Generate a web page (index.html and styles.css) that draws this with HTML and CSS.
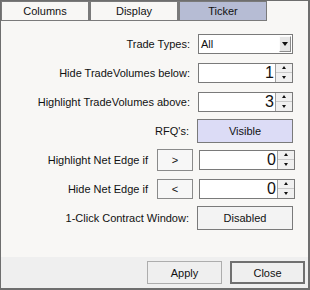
FILE: index.html
```html
<!DOCTYPE html>
<html>
<head>
    <meta charset="utf-8" />
    <title>Ticker Settings</title>
    <link rel="stylesheet" href="styles.css">
</head>
<body>
    <div class="window">
        <div class="tabs">
            <div class="tab">Columns</div>
            <div class="tab">Display</div>
            <div class="tab active">Ticker</div>
        </div>

        <div class="panel">
            <div class="row">
                <label>Trade Types:</label>
                <div class="combo">
                    <span>All</span>
                    <span class="combo_btn"><i class="arrow_down big"></i></span>
                </div>
            </div>

            <div class="row">
                <label>Hide TradeVolumes below:</label>
                <div class="spinner">
                    <span class="value">1</span>
                    <span class="spin"><b><i class="arrow_up"></i></b><b><i class="arrow_down"></i></b></span>
                </div>
            </div>

            <div class="row">
                <label>Highlight TradeVolumes above:</label>
                <div class="spinner">
                    <span class="value">3</span>
                    <span class="spin"><b><i class="arrow_up"></i></b><b><i class="arrow_down"></i></b></span>
                </div>
            </div>

            <div class="row">
                <label>RFQ's:</label>
                <button class="toggle visible">Visible</button>
            </div>

            <div class="row net">
                <label>Highlight Net Edge if</label>
                <button class="op tall">&gt;</button>
                <div class="spinner">
                    <span class="value">0</span>
                    <span class="spin"><b><i class="arrow_up"></i></b><b><i class="arrow_down"></i></b></span>
                </div>
            </div>

            <div class="row net">
                <label>Hide Net Edge if</label>
                <button class="op">&lt;</button>
                <div class="spinner">
                    <span class="value">0</span>
                    <span class="spin"><b><i class="arrow_up"></i></b><b><i class="arrow_down"></i></b></span>
                </div>
            </div>

            <div class="row">
                <label>1-Click Contract Window:</label>
                <button class="toggle">Disabled</button>
            </div>
        </div>

        <div class="footer">
            <button class="btn">Apply</button>
            <button class="btn default">Close</button>
        </div>
    </div>
</body>
</html>
```

FILE: styles.css
```css
body {
    margin: 0;
    background-color: #f8f7f5;
    color: #111;
    font-family: "Liberation Sans", Arial, sans-serif;
    font-size: 11px;
}

.window {
    width: 310px;
    height: 290px;
    box-sizing: border-box;
    border: 1px #6e6e6e solid;
    border-right-width: 2px;
    border-bottom-width: 2px;
    display: flex;
    flex-direction: column;
    background-color: #f8f7f5;
}

/* tab strip */
.tabs {
    display: flex;
    height: 20px;
}
.tab {
    width: 88px;
    box-sizing: border-box;
    border: 1px #7a7a7a solid;
    display: flex;
    align-items: center;
    justify-content: center;
}
.tab + .tab {
    border-left-width: 2px;
    width: 89px;
}
.tab.active {
    background-color: #b6bcd4;
}

/* form */
.panel {
    flex: 1;
    padding: 8px 15px 0 0;
    display: grid;
    grid-auto-rows: 29px;
}
.row {
    display: flex;
    align-items: center;
    justify-content: flex-end;
}
.row > label {
    margin-right: 8px;
}
.row.net > label {
    margin-right: 9px;
}

.combo, .spinner {
    width: 95px;
    height: 20px;
    box-sizing: border-box;
    border: 1px #7a7a7a solid;
    background-color: white;
    display: flex;
    align-items: stretch;
}
.combo > span:first-child {
    flex: 1;
    padding-left: 2px;
    align-self: center;
}
.combo_btn {
    width: 12px;
    margin: 1px;
    box-sizing: border-box;
    border: 1px solid;
    border-color: #fcfcfc #8c8c8c #8c8c8c #fcfcfc;
    background-color: #e6e6e6;
    display: flex;
    align-items: center;
    justify-content: center;
}

.spinner .value {
    flex: 1;
    text-align: right;
    font-size: 16px;
    line-height: 18px;
    padding-right: 1px;
}
.spin {
    width: 16px;
    display: flex;
    flex-direction: column;
    border-left: 1px #a0a0a0 solid;
    background-color: #f0f0f0;
}
.spin > b {
    flex: 1;
    display: flex;
    align-items: center;
    justify-content: center;
}
.spin > b + b {
    border-top: 1px #c8c8c8 solid;
}

.arrow_up, .arrow_down {
    width: 0;
    height: 0;
    border-left: 2.5px transparent solid;
    border-right: 2.5px transparent solid;
}
.arrow_up {
    border-bottom: 3px #111 solid;
}
.arrow_down {
    border-top: 3px #111 solid;
}
.arrow_down.big {
    border-left-width: 3.5px;
    border-right-width: 3.5px;
    border-top-width: 4px;
}

button {
    font-family: inherit;
    font-size: 11px;
    color: #111;
    padding: 0;
    box-sizing: border-box;
}
.toggle {
    width: 96px;
    height: 24px;
    border: 1px #7a7a7a solid;
    background-color: #f3f3f3;
}
.toggle.visible {
    background-color: #dcdcf6;
}
.op {
    width: 36px;
    height: 20px;
    margin-right: 6px;
    border: 1px #8a8a8a solid;
    background-color: #f7f7f7;
}
.op.tall {
    height: 22px;
}
.net .spinner {
    width: 96px;
    margin-right: -2px;
}

/* footer */
.footer {
    height: 31px;
    background-color: #efefef;
    display: flex;
    justify-content: flex-end;
    align-items: flex-start;
    padding: 4px 3px 0 0;
    box-sizing: border-box;
    gap: 8px;
}
.btn {
    width: 75px;
    height: 23px;
    border: 1px #adadad solid;
    background-color: #efefef;
}
.btn.default {
    border: 2px #707070 solid;
}
```
